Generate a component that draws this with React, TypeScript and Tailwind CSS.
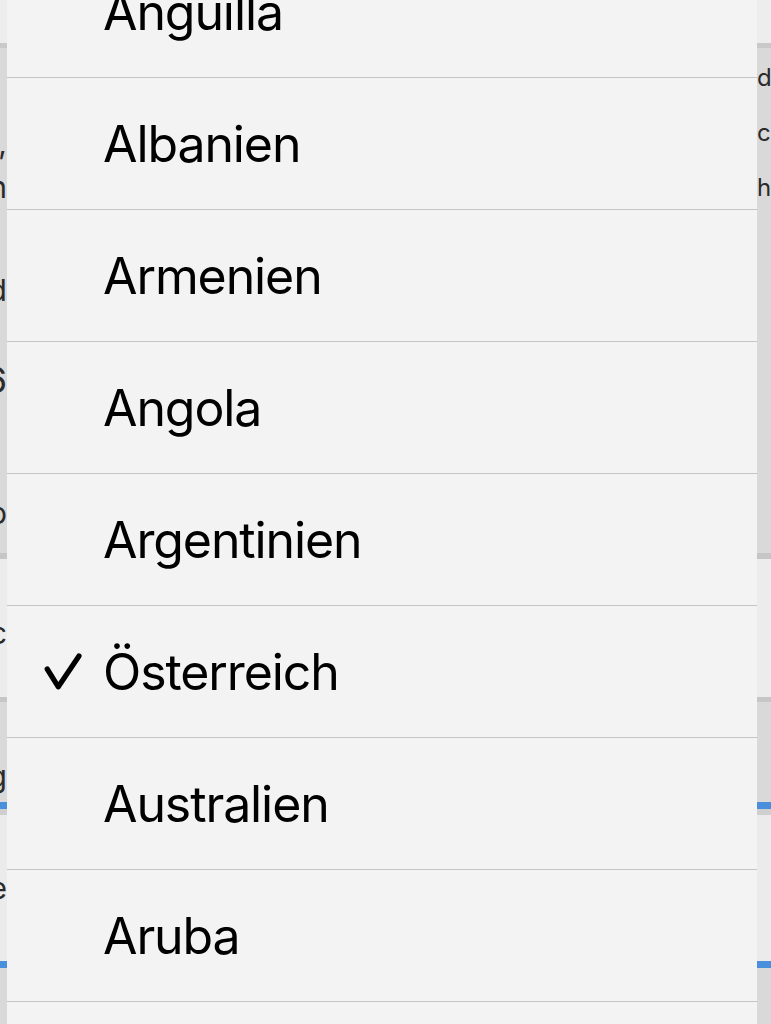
import React from "react";

const items = [
  "Anguilla",
  "Albanien",
  "Armenien",
  "Angola",
  "Argentinien",
  "Österreich",
  "Australien",
  "Aruba",
  "Aserbaidschan",
];

function Check() {
  return (
    <svg width="38" height="38" viewBox="0 0 38 38" fill="none" className="block">
      <path
        d="M3.2 16 L14.3 33.8 L35 3"
        stroke="#000"
        strokeWidth="5.2"
        strokeLinecap="round"
        strokeLinejoin="round"
      />
    </svg>
  );
}

export default function App() {
  return (
    <div
      className="grid h-[1024px] w-[771px] overflow-hidden bg-[#d9d9d9]"
      style={{ fontFamily: "Inter, 'Noto Sans', sans-serif" }}
    >
      {/* background page bands */}
      <div className="col-start-1 row-start-1 flex flex-col">
        <div className="h-[43px] bg-[#ededed]" />
        <div className="h-[5px] bg-[#c9c9c9]" />
        <div className="h-[505px] bg-[#d9d9d9]" />
        <div className="h-[6px] bg-[#c6c6c6]" />
        <div className="h-[138px] bg-[#ececec]" />
        <div className="h-[5px] bg-[#c6c6c6]" />
        <div className="h-[100px] bg-[#d9d9d9]" />
        <div className="h-[7px] bg-[#4a8fdc]" />
        <div className="h-[6px] bg-[#cfcfcf]" />
        <div className="h-[146px] bg-[#ebebeb]" />
        <div className="h-[7px] bg-[#4a8fdc]" />
        <div className="flex-1 bg-[#d9d9d9]" />
      </div>

      {/* background page text peeking out at the edges */}
      <div className="col-start-1 row-start-1 grid grid-cols-[7px_1fr_14px] text-[#2a2a2a]">
        <div className="flex flex-col overflow-hidden text-[30px] leading-none">
          <div className="h-[128px]" />
          <div className="flex h-[30px] items-center justify-end whitespace-nowrap">so,</div>
          <div className="h-[14px]" />
          <div className="flex h-[30px] items-center justify-end whitespace-nowrap">in</div>
          <div className="h-[73px]" />
          <div className="flex h-[30px] items-center justify-end whitespace-nowrap">und</div>
          <div className="h-[57px]" />
          <div className="flex h-[36px] items-center justify-end whitespace-nowrap text-[36px]">16</div>
          <div className="h-[100px]" />
          <div className="flex h-[30px] items-center justify-end whitespace-nowrap">o</div>
          <div className="h-[90px]" />
          <div className="flex h-[30px] items-center justify-end whitespace-nowrap">c</div>
          <div className="h-[113px]" />
          <div className="flex h-[30px] items-center justify-end whitespace-nowrap">g</div>
          <div className="h-[82px]" />
          <div className="flex h-[30px] items-center justify-end whitespace-nowrap">e</div>
        </div>
        <div />
        <div className="flex flex-col overflow-hidden text-[24px] leading-none">
          <div className="h-[64px]" />
          <div className="flex h-[28px] items-center whitespace-nowrap">das</div>
          <div className="h-[27px]" />
          <div className="flex h-[28px] items-center whitespace-nowrap">ca</div>
          <div className="h-[27px]" />
          <div className="flex h-[28px] items-center whitespace-nowrap">hat</div>
        </div>
      </div>

      {/* picker menu */}
      <div className="col-start-1 row-start-1 ml-[7px] mt-[-54px] w-[750px] self-start bg-[#f3f3f3]">
        {items.map((name) => (
          <div
            key={name}
            className="flex h-[132px] items-center border-b border-[#c4c4c4]"
          >
            <div className="flex w-[96px] shrink-0 items-center pl-[37px]">
              {name === "Österreich" ? <Check /> : null}
            </div>
            <div className="text-[50px] leading-none tracking-[-1.1px] text-black">{name}</div>
          </div>
        ))}
      </div>
    </div>
  );
}
